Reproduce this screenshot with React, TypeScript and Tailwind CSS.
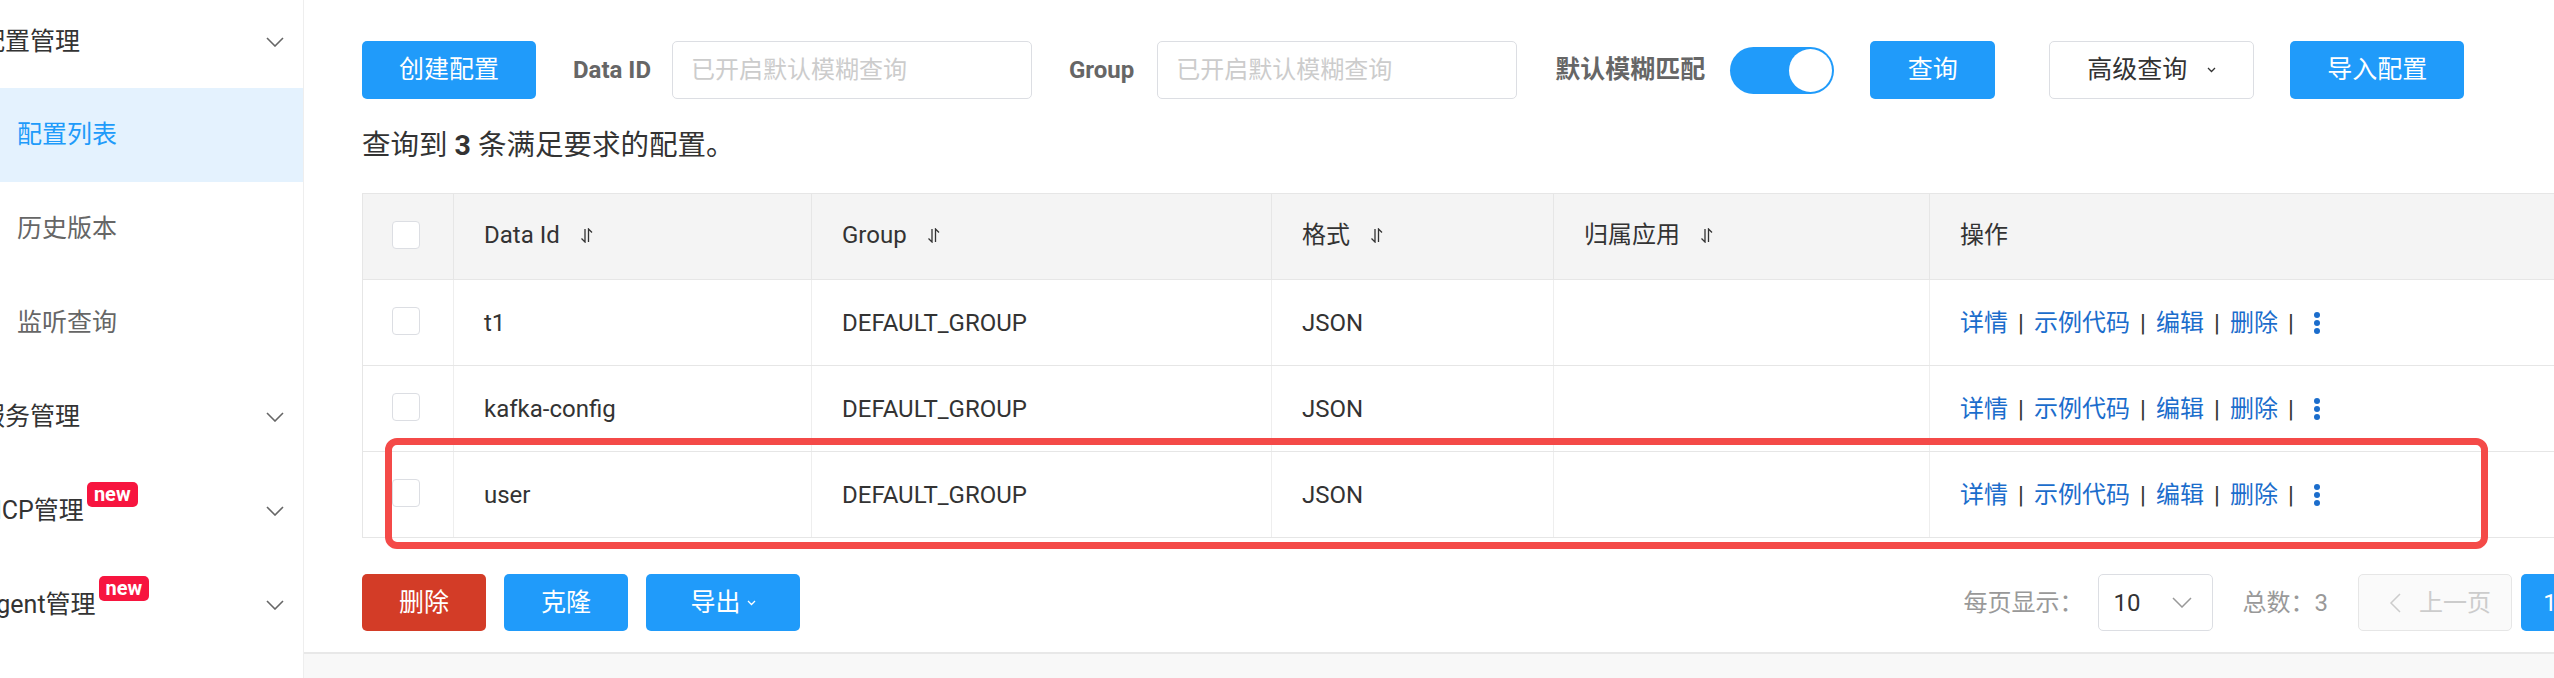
import React from "react";

// 사이드바 메뉴 아래 화살표
function ChevronDown({ className = "" }: { className?: string }) {
  return (
    <svg width="18" height="10" viewBox="0 0 18 10" className={className}>
      <path d="M1 1 L9 9 L17 1" fill="none" stroke="#666" strokeWidth="1.6" />
    </svg>
  );
}

function SmallChevron({ color = "#333" }: { color?: string }) {
  return (
    <svg width="9" height="6" viewBox="0 0 9 6">
      <path d="M1 1 L4.5 4.5 L8 1" fill="none" stroke={color} strokeWidth="1.3" />
    </svg>
  );
}

function SortIcon() {
  return (
    <svg width="15" height="15" viewBox="0 0 15 15" className="ml-[19px] shrink-0">
      <path d="M6 1 V14 L2.5 10.5" fill="none" stroke="#333" strokeWidth="1.3" />
      <path d="M9.5 14 V1 L13 4.5" fill="none" stroke="#333" strokeWidth="1.3" />
    </svg>
  );
}

function Checkbox() {
  return <div className="w-[28px] h-[28px] rounded-[4px] border border-[#dcdee3] bg-white" />;
}

function NavGroup({ label, badge, first }: { label: string; badge?: boolean; first?: boolean }) {
  return (
    <div
      className={`flex items-center justify-between pr-[19px] ${
        first ? "h-[88px] pb-[4px]" : "h-[94px]"
      }`}
    >
      <span className="relative -ml-[20px] text-[25px] leading-[30px] text-[#333] whitespace-nowrap">
        {label}
        {badge && (
          <span className="absolute left-full ml-[3px] -top-[14px] h-[25px] px-[7px] rounded-[5px] bg-[#f7153f] text-white text-[20px] font-bold leading-[25px]">
            new
          </span>
        )}
      </span>
      <ChevronDown />
    </div>
  );
}

function NavItem({ label, active }: { label: string; active?: boolean }) {
  return (
    <div
      className={`h-[94px] flex items-center pl-[17px] text-[25px] ${
        active ? "bg-[#e4f2fe] text-[#209bfa]" : "text-[#666]"
      }`}
    >
      {label}
    </div>
  );
}

const rows = [
  { id: "t1", group: "DEFAULT_GROUP", type: "JSON" },
  { id: "kafka-config", group: "DEFAULT_GROUP", type: "JSON" },
  { id: "user", group: "DEFAULT_GROUP", type: "JSON" },
];

function Actions() {
  const links = ["详情", "示例代码", "编辑", "删除"];
  return (
    <div className="flex items-center text-[24px]">
      {links.map((l) => (
        <React.Fragment key={l}>
          <span className="text-[#1b6dcc]">{l}</span>
          <span className="w-[26px] text-center text-[#333]">|</span>
        </React.Fragment>
      ))}
      <svg width="8" height="24" viewBox="0 0 8 24" className="ml-[9px]">
        <circle cx="4" cy="4" r="3" fill="#1b6dcc" />
        <circle cx="4" cy="12" r="3" fill="#1b6dcc" />
        <circle cx="4" cy="20" r="3" fill="#1b6dcc" />
      </svg>
    </div>
  );
}

export default function App() {
  return (
    <div className="flex w-[2554px] h-[678px] overflow-hidden bg-white text-[#333] font-[family-name:Roboto,'Noto_Sans_CJK_SC',sans-serif]">
      {/* 사이드바 */}
      <aside className="w-[304px] shrink-0 h-full border-r border-[#eee] overflow-hidden">
        <NavGroup label="配置管理" first />
        <NavItem label="配置列表" active />
        <NavItem label="历史版本" />
        <NavItem label="监听查询" />
        <NavGroup label="服务管理" />
        <NavGroup label="MCP管理" badge />
        <NavGroup label="Agent管理" badge />
      </aside>

      {/* 메인 */}
      <main className="flex-1 min-w-0 flex flex-col overflow-hidden">
        <div className="flex-1 pl-[58px] pt-[41px]">
          <div className="w-[2380px]">
            {/* 툴바 */}
            <div className="flex items-center h-[58px] text-[25px]">
              <button className="w-[174px] h-[58px] rounded-[5px] bg-[#209bfa] text-white">创建配置</button>
              <span className="ml-[37px] font-bold text-[#666] text-[24px]">Data ID</span>
              <div className="ml-[21px] w-[360px] h-[58px] rounded-[5px] border border-[#dcdee3] flex items-center pl-[18px] text-[24px] text-[#ccc]">
                已开启默认模糊查询
              </div>
              <span className="ml-[37px] font-bold text-[#666] text-[24px]">Group</span>
              <div className="ml-[23px] w-[360px] h-[58px] rounded-[5px] border border-[#dcdee3] flex items-center pl-[18px] text-[24px] text-[#ccc]">
                已开启默认模糊查询
              </div>
              <span className="ml-[38px] font-bold text-[#666] text-[25px]">默认模糊匹配</span>
              <div className="ml-[25px] w-[104px] h-[47px] rounded-full bg-[#209bfa] flex items-center justify-end pr-[2px]">
                <div className="w-[43px] h-[43px] rounded-full bg-white" />
              </div>
              <button className="ml-[36px] w-[125px] h-[58px] rounded-[5px] bg-[#209bfa] text-white">查询</button>
              <button className="ml-[54px] w-[205px] h-[58px] rounded-[5px] border border-[#dcdee3] bg-white flex items-center pl-[37px] gap-[20px] text-[#333]">
                高级查询
                <SmallChevron />
              </button>
              <button className="ml-[36px] w-[174px] h-[58px] rounded-[5px] bg-[#209bfa] text-white">导入配置</button>
            </div>

            {/* 결과 안내 */}
            <div className="mt-[27px] h-[40px] leading-[40px] text-[28.5px] text-[#333]">
              查询到 <span className="font-bold">3</span> 条满足要求的配置。
            </div>

            {/* 테이블 */}
            <div className="relative mt-[27px]">
              <table className="w-full table-fixed border-collapse text-[24px]">
                <colgroup>
                  <col className="w-[91px]" />
                  <col className="w-[358px]" />
                  <col className="w-[460px]" />
                  <col className="w-[282px]" />
                  <col className="w-[376px]" />
                  <col />
                </colgroup>
                <thead>
                  <tr className="h-[86px] bg-[#f4f4f4]">
                    <th className="border border-[#e6e6e6] font-normal">
                      <div className="flex justify-center pr-[4px] pb-[4px]">
                        <Checkbox />
                      </div>
                    </th>
                    {["Data Id", "Group", "格式", "归属应用"].map((h) => (
                      <th key={h} className="border border-[#e6e6e6] font-normal text-left pl-[30px]">
                        <div className="flex items-center pb-[3px]">
                          {h}
                          <SortIcon />
                        </div>
                      </th>
                    ))}
                    <th className="border border-[#e6e6e6] font-normal text-left pl-[30px] pb-[3px]">操作</th>
                  </tr>
                </thead>
                <tbody>
                  {rows.map((r) => (
                    <tr key={r.id} className="h-[86px]">
                      <td className="border border-[#e6e6e6] border-r-[#eee]">
                        <div className="flex justify-center pr-[4px] pb-[4px]">
                          <Checkbox />
                        </div>
                      </td>
                      <td className="border border-[#e6e6e6] border-x-[#eee] pl-[30px]">{r.id}</td>
                      <td className="border border-[#e6e6e6] border-x-[#eee] pl-[30px]">{r.group}</td>
                      <td className="border border-[#e6e6e6] border-x-[#eee] pl-[30px]">{r.type}</td>
                      <td className="border border-[#e6e6e6] border-x-[#eee] pl-[30px]"></td>
                      <td className="border border-[#e6e6e6] border-l-[#eee] pl-[30px]">
                        <Actions />
                      </td>
                    </tr>
                  ))}
                </tbody>
              </table>
              {/* 강조 표시 박스 */}
              <div className="absolute left-[23px] top-[245px] w-[2103px] h-[111px] border-[7px] border-[#f44a48] rounded-[12px] pointer-events-none" />
            </div>

            {/* 하단 바 */}
            <div className="mt-[36px] flex items-center justify-between h-[57px] text-[25px]">
              <div className="flex items-center gap-[18px]">
                <button className="w-[124px] h-[57px] rounded-[5px] bg-[#d33c27] text-white">删除</button>
                <button className="w-[124px] h-[57px] rounded-[5px] bg-[#209bfa] text-white">克隆</button>
                <button className="w-[154px] h-[57px] rounded-[5px] bg-[#209bfa] text-white flex items-center justify-center gap-[6px]">
                  导出
                  <SmallChevron color="#fff" />
                </button>
              </div>
              <div className="flex items-center text-[24px]">
                <span className="text-[#999]">每页显示：</span>
                <div className="ml-[14px] w-[115px] h-[57px] rounded-[5px] border border-[#dcdee3] flex items-center justify-between pl-[15px] pr-[20px] text-[#333]">
                  10
                  <svg width="20" height="11" viewBox="0 0 20 11">
                    <path d="M1 1 L10 10 L19 1" fill="none" stroke="#999" strokeWidth="1.5" />
                  </svg>
                </div>
                <span className="ml-[30px] text-[#999]">总数：3</span>
                <div className="ml-[30px] w-[154px] h-[57px] rounded-[5px] border border-[#e6e6e6] bg-[#fafafa] flex items-center pl-[30px] gap-[18px] text-[#ccc]">
                  <svg width="12" height="20" viewBox="0 0 12 20">
                    <path d="M11 1 L2 10 L11 19" fill="none" stroke="#ccc" strokeWidth="1.5" />
                  </svg>
                  上一页
                </div>
                <div className="ml-[9px] w-[58px] h-[57px] rounded-[5px] bg-[#209bfa] text-white flex items-center justify-center">
                  1
                </div>
                <div className="ml-[9px] w-[154px] h-[57px] rounded-[5px] border border-[#dcdee3] bg-white flex items-center justify-center text-[#333]">
                  下一页
                </div>
              </div>
            </div>
          </div>
        </div>
        <div className="h-[26px] shrink-0 bg-[#f8f8f8] border-t-2 border-[#e8e8e8]" />
      </main>
    </div>
  );
}
